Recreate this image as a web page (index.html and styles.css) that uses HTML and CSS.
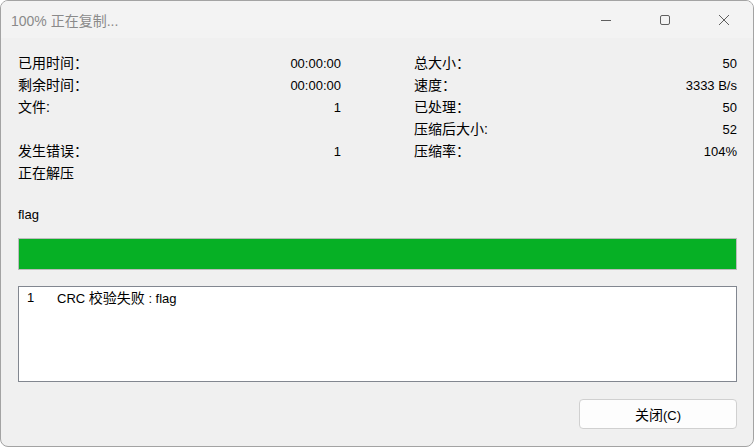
FILE: index.html
```html
<!doctype html>
<html lang="zh-CN">
<head>
    <meta charset="UTF-8">
    <title>100% 正在复制...</title>
    <link rel="stylesheet" href="styles.css">
</head>
<body>
    <div class="window">
        <div class="titlebar">
            <div class="title">100% 正在复制...</div>
            <div class="controls">
                <div class="ctl">
                    <svg width="12" height="12" viewBox="0 0 12 12"><path d="M1 6.5h10" stroke="#5f5f5f" stroke-width="1"/></svg>
                </div>
                <div class="ctl">
                    <svg width="12" height="12" viewBox="0 0 12 12"><rect x="1.5" y="1.5" width="9" height="9" rx="1.5" fill="none" stroke="#5f5f5f" stroke-width="1"/></svg>
                </div>
                <div class="ctl">
                    <svg width="12" height="12" viewBox="0 0 12 12"><path d="M1 1l10 10M11 1L1 11" stroke="#5f5f5f" stroke-width="1"/></svg>
                </div>
            </div>
        </div>
        <div class="content">
            <div class="stats">
                <div class="col">
                    <div class="row"><span class="label">已用时间：</span><span>00:00:00</span></div>
                    <div class="row"><span class="label">剩余时间：</span><span>00:00:00</span></div>
                    <div class="row"><span class="label">文件:</span><span>1</span></div>
                    <div class="row"></div>
                    <div class="row"><span class="label">发生错误：</span><span>1</span></div>
                    <div class="row"><span class="label">正在解压</span></div>
                </div>
                <div class="col">
                    <div class="row"><span class="label">总大小：</span><span>50</span></div>
                    <div class="row"><span class="label">速度：</span><span>3333 B/s</span></div>
                    <div class="row"><span class="label">已处理：</span><span>50</span></div>
                    <div class="row"><span class="label">压缩后大小:</span><span>52</span></div>
                    <div class="row"><span class="label">压缩率：</span><span>104%</span></div>
                </div>
            </div>
            <div class="filename">flag</div>
            <div class="progress"><div class="bar" style="width: 100%"></div></div>
            <div class="log">
                <div class="log-row"><span class="num">1</span><span>CRC <span class="cjk">校验失败</span> : flag</span></div>
            </div>
            <div class="actions">
                <button class="btn"><span class="cjk">关闭</span>(C)</button>
            </div>
        </div>
    </div>
</body>
</html>
```

FILE: styles.css
```css
html, body {
    margin: 0;
    padding: 0;
    background: #ffffff;
}
body {
    font-family: "Liberation Sans", "Noto Sans CJK SC", sans-serif;
    font-size: 13px;
    color: #000;
}
.window {
    width: 754px;
    height: 447px;
    box-sizing: border-box;
    border: 1px solid #a3a3a3;
    border-radius: 8px;
    overflow: hidden;
    background: #f0f0f0;
}
.titlebar {
    height: 37px;
    background: #f3f3f3;
    display: flex;
    justify-content: space-between;
    align-items: center;
}
.title {
    padding-left: 10px;
    font-size: 14px;
    color: #8a8a8a;
}
.controls {
    display: flex;
    height: 100%;
}
.ctl {
    width: 59px;
    display: flex;
    justify-content: center;
    align-items: center;
}
.content {
    padding: 14px 16px 0 17px;
}
.stats {
    display: grid;
    grid-template-columns: 323px 323px;
    column-gap: 73px;
}
.row {
    height: 22px;
    line-height: 22px;
    display: flex;
    justify-content: space-between;
    align-items: baseline;
}
.label {
    font-size: 14px;
}
.cjk {
    font-size: 14px;
}
.filename {
    margin-top: 20px;
    line-height: 22px;
}
.progress {
    margin-top: 12px;
    height: 32px;
    box-sizing: border-box;
    border: 1px solid #bcbcbc;
    background: #e6e6e6;
}
.bar {
    height: 100%;
    background: #06b025;
}
.log {
    margin-top: 16px;
    height: 96px;
    box-sizing: border-box;
    border: 1px solid #828790;
    background: #ffffff;
}
.log-row {
    line-height: 20px;
    padding: 1px 0 0 8px;
    display: flex;
}
.num {
    width: 30px;
}
.actions {
    margin-top: 17px;
    display: flex;
    justify-content: flex-end;
}
.btn {
    width: 158px;
    height: 30px;
    font-family: inherit;
    font-size: 13px;
    color: #000;
    background: #fdfdfd;
    border: 1px solid #d0d0d0;
    border-radius: 4px;
}
```
